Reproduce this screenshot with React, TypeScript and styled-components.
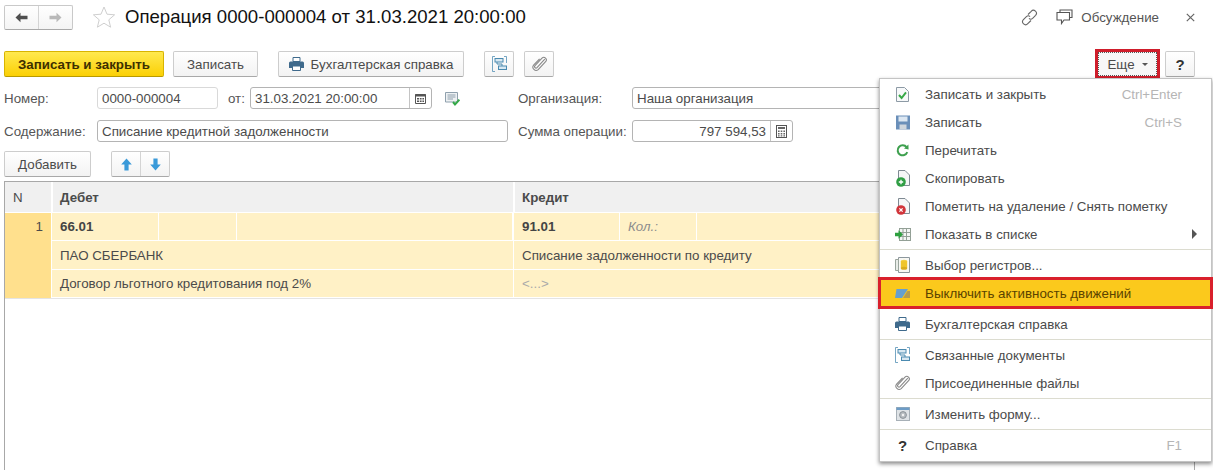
import React from 'react';
import styled, { createGlobalStyle } from 'styled-components';

const GlobalStyle = createGlobalStyle`
  html, body {
    margin: 0;
    padding: 0;
    background: #fff;
  }
  body {
    font-family: "Liberation Sans", Arial, sans-serif;
    font-size: 13.33px;
    color: #4b4b4b;
  }
`;

const Page = styled.div`
  position: relative;
  width: 1213px;
  height: 470px;
  overflow: hidden;
  padding: 4px 18px 0 4px;
  box-sizing: border-box;
`;

const Header = styled.div`
  display: flex;
  align-items: center;
  height: 26px;
`;

const NavGroup = styled.div`
  display: flex;
  width: 69px;
  height: 25px;
  border: 1px solid #c9c9c9;
  border-bottom-color: #a9a9a9;
  border-radius: 2px;
  box-sizing: border-box;
  background: linear-gradient(#fff, #f4f4f4);
`;

const NavCell = styled.div<{ $divider?: boolean }>`
  flex: 1;
  display: flex;
  align-items: center;
  justify-content: center;
  border-left: ${(p) => (p.$divider ? '1px solid #d4d4d4' : 'none')};
`;

const StarWrap = styled.div`
  margin-left: 19px;
  height: 24px;
`;

const Title = styled.h1`
  margin: 0 0 0 9px;
  font-size: 18.6px;
  font-weight: 400;
  color: #111;
  white-space: nowrap;
`;

const HeaderRight = styled.div`
  margin-left: auto;
  display: flex;
  align-items: center;
  color: #555;
`;

const HeaderGap = styled.span`
  width: 18px;
`;

const Discuss = styled.span`
  margin: 0 27px 0 8px;
`;

const Toolbar = styled.div`
  display: flex;
  align-items: center;
  margin-top: 21px;
  height: 26px;
`;

const Button = styled.button<{ $primary?: boolean; $width: number; $gap?: number }>`
  display: flex;
  align-items: center;
  justify-content: center;
  flex: none;
  width: ${(p) => p.$width}px;
  height: 26px;
  margin-left: ${(p) => p.$gap ?? 0}px;
  padding: 0;
  box-sizing: border-box;
  font-family: inherit;
  font-size: 13.33px;
  font-weight: ${(p) => (p.$primary ? 700 : 400)};
  color: ${(p) => (p.$primary ? '#3d3000' : '#4b4b4b')};
  border: 1px solid ${(p) => (p.$primary ? '#d8b400' : '#cdcdcd')};
  border-bottom-color: ${(p) => (p.$primary ? '#b89a00' : '#a9a9a9')};
  border-radius: 2px;
  background: ${(p) => (p.$primary ? 'linear-gradient(#ffe94f, #fbd005)' : 'linear-gradient(#fff, #f3f3f3)')};
  svg + span {
    margin-left: 7px;
  }
`;

const MoreButton = styled(Button)`
  margin-left: auto;
  gap: 7px;
  height: 24px;
  background: #f7f7f7;
  border: 1px dotted #555;
  border-radius: 0;
  outline: 3px solid #cf1d2b;
`;

const Caret = styled.i`
  width: 0;
  height: 0;
  border-left: 3px solid transparent;
  border-right: 3px solid transparent;
  border-top: 3px solid #555;
`;

const FieldRow = styled.div<{ $top: number }>`
  display: flex;
  align-items: center;
  height: 22px;
  margin-top: ${(p) => p.$top}px;
`;

const ActionRow = styled(FieldRow)`
  height: 26px;
`;

const Label = styled.span<{ $width: number; $gap?: number }>`
  flex: none;
  width: ${(p) => p.$width}px;
  margin-left: ${(p) => p.$gap ?? 0}px;
  white-space: nowrap;
  color: #555;
`;

const Input = styled.div<{ $width: number; $dim?: boolean; $right?: boolean }>`
  flex: none;
  display: flex;
  align-items: center;
  width: ${(p) => p.$width}px;
  height: 22px;
  box-sizing: border-box;
  padding: ${(p) => (p.$right ? '0' : '0 0 0 4px')};
  border: 1px solid ${(p) => (p.$dim ? '#d9d9d9' : '#b4b4b4')};
  border-radius: 3px;
  background: #fff;
  color: #4b4b4b;
  white-space: nowrap;
  overflow: hidden;
`;

const InputText = styled.span<{ $right?: boolean }>`
  flex: 1;
  text-align: ${(p) => (p.$right ? 'right' : 'left')};
  padding-right: ${(p) => (p.$right ? '4px' : '0')};
`;

const InputAddon = styled.span`
  flex: none;
  display: flex;
  align-items: center;
  justify-content: center;
  width: 21px;
  height: 100%;
  border-left: 1px solid #c4c4c4;
`;

const StatusIcon = styled.span`
  display: flex;
  margin-left: 13px;
`;

const ArrowGroup = styled.div`
  display: flex;
  width: 59px;
  height: 26px;
  margin-left: 20px;
  box-sizing: border-box;
  border: 1px solid #cdcdcd;
  border-bottom-color: #a9a9a9;
  border-radius: 2px;
  background: linear-gradient(#fff, #f3f3f3);
`;

const TableGrid = styled.div`
  margin-top: 4px;
  height: 300px;
  border: 1px solid #a8a8a8;
  border-bottom: none;
  box-sizing: border-box;
`;

const HeadRow = styled.div`
  display: grid;
  grid-template-columns: 46px 462px 1fr;
  height: 30px;
  background: #f0f0f0;
  color: #4b4b4b;
`;

const HeadCell = styled.div<{ $plain?: boolean }>`
  display: flex;
  align-items: center;
  padding-left: ${(p) => (p.$plain ? '8px' : '7px')};
  border-left: ${(p) => (p.$plain ? 'none' : '2px solid #fff')};
  font-weight: ${(p) => (p.$plain ? 400 : 700)};
`;

const BodyRow = styled.div`
  display: grid;
  grid-template-columns: 46px 1fr;
  height: 85px;
  margin-top: 1px;
  border-bottom: 1px solid #e4e4e4;
`;

const RowNumber = styled.div`
  background: #ffe08d;
  text-align: right;
  padding: 6px 8px 0 0;
`;

const RowSheet = styled.div`
  display: grid;
  grid-template-columns: 462px 1fr;
  grid-template-rows: 28px 29px 28px;
  background: #fff1c6;
`;

const Cell = styled.div<{ $dim?: boolean }>`
  display: flex;
  align-items: center;
  padding-left: 8px;
  border-left: 1px solid #fff;
  border-bottom: 1px solid #fff;
  color: ${(p) => (p.$dim ? '#aaa' : '#4b4b4b')};
  white-space: nowrap;
`;

const SplitCell = styled.div<{ $columns: string }>`
  display: grid;
  grid-template-columns: ${(p) => p.$columns};
  border-left: 1px solid #fff;
  border-bottom: 1px solid #fff;
`;

const SubCell = styled.div<{ $bold?: boolean; $muted?: boolean }>`
  display: flex;
  align-items: center;
  padding-left: 8px;
  border-right: 1px solid #fff;
  font-weight: ${(p) => (p.$bold ? 700 : 400)};
  font-style: ${(p) => (p.$muted ? 'italic' : 'normal')};
  color: ${(p) => (p.$muted ? '#8d8d8d' : '#444')};
`;

const Menu = styled.div`
  position: absolute;
  left: 879px;
  top: 78px;
  width: 333px;
  height: 384px;
  padding-top: 1px;
  box-sizing: border-box;
  background: #fff;
  border: 1px solid #c4c4c4;
  box-shadow: 0 2px 4px rgba(0, 0, 0, 0.45);
`;

const MenuRow = styled.div<{ $active?: boolean }>`
  display: flex;
  align-items: center;
  height: 28px;
  margin-bottom: ${(p) => (p.$active ? '3px' : '0')};
  padding-right: 29px;
  background: ${(p) => (p.$active ? '#fbc91c' : 'transparent')};
  outline: ${(p) => (p.$active ? '3px solid #d9202c' : 'none')};
  outline-offset: -1px;
  color: ${(p) => (p.$active ? '#5a4300' : '#4b4b4b')};
`;

const MenuIcon = styled.span`
  flex: none;
  display: flex;
  justify-content: center;
  width: 45px;
`;

const MenuText = styled.span`
  flex: 1;
  white-space: nowrap;
`;

const Shortcut = styled.span`
  color: #b5b5b5;
`;

const SubArrow = styled.i`
  width: 0;
  height: 0;
  margin-right: -15px;
  border-top: 5px solid transparent;
  border-bottom: 5px solid transparent;
  border-left: 5px solid #555;
`;

const Separator = styled.div`
  height: 1px;
  margin: 1px 0;
  background: #dcdcd0;
`;

const ArrowLeft = ({ color, flip }: { color: string; flip?: boolean }) => (
  <svg width="13" height="11" viewBox="0 0 13 11" style={flip ? { transform: 'scaleX(-1)' } : undefined}>
    <path d="M0.5 5.5 L5.5 0.8 V3.8 H12.5 V7.2 H5.5 V10.2 Z" fill={color} />
  </svg>
);

const Star = () => (
  <svg width="24" height="24" viewBox="0 0 24 24">
    <path d="M12 2 L15 9.2 L22.6 9.8 L16.8 14.8 L18.6 22.2 L12 18.2 L5.4 22.2 L7.2 14.8 L1.4 9.8 L9 9.2 Z" fill="#fff" stroke="#cfcfcf" />
  </svg>
);

const LinkIcon = () => (
  <svg width="17" height="17" viewBox="0 0 17 17" fill="none" stroke="#666" strokeWidth="1.1">
    <path d="M7 5.5 L10.2 2.3 A2.6 2.6 0 0 1 14.6 6.3 L11.6 9.4 A2.6 2.6 0 0 1 8 9.4" />
    <path d="M10 11.5 L6.8 14.7 A2.6 2.6 0 0 1 2.4 10.7 L5.4 7.6 A2.6 2.6 0 0 1 9 7.6" />
  </svg>
);

const ChatIcon = () => (
  <svg width="17" height="16" viewBox="0 0 17 16" fill="none" stroke="#555" strokeWidth="1.1">
    <path d="M4 3.5 V1 H16 V8.5 H13.5" />
    <path d="M1 3.5 H13.5 V11 H8 L5.5 14.5 V11 H1 Z" fill="#fff" />
  </svg>
);

const CloseIcon = () => (
  <svg width="9" height="9" viewBox="0 0 9 9" stroke="#666" strokeWidth="1.2">
    <path d="M0.8 0.8 L8.2 8.2 M8.2 0.8 L0.8 8.2" />
  </svg>
);

const Printer = () => (
  <svg width="15" height="14" viewBox="0 0 15 14">
    <path d="M4 0.5 H11 V4.5 H4 Z" fill="#fff" stroke="#3f6a8c" />
    <path d="M1.5 4.5 H13.5 Q15 4.5 15 6 V11 H12 V9 H3 V11 H0 V6 Q0 4.5 1.5 4.5 Z" fill="#3f6a8c" />
    <path d="M3.5 9 H11.5 V13.5 H3.5 Z" fill="#fff" stroke="#3f6a8c" />
  </svg>
);

const Structure = () => (
  <svg width="15" height="16" viewBox="0 0 15 16" fill="none" stroke="#4a8ab0">
    <path d="M3 0.5 H0.5 V15.5 H3 M12 0.5 H14.5 V7" strokeOpacity="0.75" />
    <rect x="3" y="2.5" width="8" height="3.5" fill="#d8e8f2" />
    <rect x="6.5" y="10" width="8" height="3.5" fill="#d8e8f2" />
    <path d="M5 6 V8 H10 V10" />
  </svg>
);

const Clip = () => (
  <svg width="15" height="16" viewBox="0 0 15 16" fill="none" stroke="#888" strokeWidth="1.1">
    <path d="M12.8 3.2 L5 11.6 A1.4 1.4 0 0 1 3 9.6 L10 2.2 A2.4 2.4 0 0 1 13.6 5.6 L6.2 13.6 A3.2 3.2 0 0 1 1.6 9.2 L7.6 2.8" />
  </svg>
);

const Calendar = () => (
  <svg width="11" height="11" viewBox="0 0 11 11">
    <path d="M0.5 1.5 H10.5 V10.5 H0.5 Z" fill="#fff" stroke="#555" />
    <path d="M0.5 1 H10.5 V3.5 H0.5 Z M2 5 H4 V6.5 H2 Z M4.8 5 H6.6 V6.5 H4.8 Z M7.4 5 H9 V6.5 H7.4 Z M2 7.5 H4 V9 H2 Z M4.8 7.5 H6.6 V9 H4.8 Z M7.4 7.5 H9 V9 H7.4 Z" fill="#555" />
  </svg>
);

const Calculator = () => (
  <svg width="11" height="13" viewBox="0 0 11 13">
    <rect x="0.5" y="0.5" width="10" height="12" fill="#fff" stroke="#555" />
    <path d="M2 2 H9 V4 H2 Z M2 5.5 H3.6 V7 H2 Z M4.7 5.5 H6.3 V7 H4.7 Z M7.4 5.5 H9 V7 H7.4 Z M2 8 H3.6 V9.5 H2 Z M4.7 8 H6.3 V9.5 H4.7 Z M7.4 8 H9 V9.5 H7.4 Z M2 10.3 H3.6 V11.5 H2 Z M4.7 10.3 H6.3 V11.5 H4.7 Z M7.4 10.3 H9 V11.5 H7.4 Z" fill="#666" />
  </svg>
);

const Posted = () => (
  <svg width="15" height="15" viewBox="0 0 15 15">
    <path d="M0.5 1.5 H12.5 V11 H0.5 Z" fill="#eef1f3" stroke="#8fa0ad" />
    <path d="M2.5 4 H10.5 M2.5 6 H10.5 M2.5 8 H8" stroke="#8fa0ad" />
    <path d="M8 11 L10 13.4 L14.4 8.6" fill="none" stroke="#35a948" strokeWidth="2" />
  </svg>
);

const ArrowUp = ({ down }: { down?: boolean }) => (
  <svg width="11" height="13" viewBox="0 0 11 13" style={down ? { transform: 'scaleY(-1)' } : undefined}>
    <path d="M5.5 0.5 L10.8 6.5 H7.6 V12.5 H3.4 V6.5 H0.2 Z" fill="#3a9ad9" />
  </svg>
);

const DocCheck = () => (
  <svg width="13" height="15" viewBox="0 0 13 15">
    <path d="M0.5 0.5 H8.5 L12.5 4.5 V14.5 H0.5 Z" fill="#f7f9fa" stroke="#8d9aa5" />
    <path d="M3 8 L5.6 11 L10 5.4" fill="none" stroke="#36a846" strokeWidth="2" />
  </svg>
);

const Floppy = () => (
  <svg width="14" height="15" viewBox="0 0 14 15">
    <path d="M0 0.5 H14 V14.5 H0 Z" fill="#6a8fb9" />
    <rect x="2.5" y="1.5" width="9" height="5" fill="#dce7f2" />
    <rect x="3.5" y="9.5" width="7" height="5" fill="#cfd6dd" />
  </svg>
);

const Reload = () => (
  <svg width="13" height="13" viewBox="0 0 13 13" fill="none">
    <path d="M10.6 3.2 A5 5 0 1 0 11.3 8.2" stroke="#3ea04f" strokeWidth="2" />
    <path d="M8 4.6 L12.6 5.4 L12.4 0.6 Z" fill="#3ea04f" />
  </svg>
);

const DocBadge = ({ color, mark }: { color: string; mark: 'plus' | 'cross' }) => (
  <svg width="14" height="17" viewBox="0 0 14 17">
    <path d="M2.5 0.5 H9 L13.5 5 V15.5 H2.5 Z" fill="#f5f6f7" stroke="#7f8a93" />
    <circle cx="5" cy="12" r="4.8" fill={color} />
    {mark === 'plus' ? (
      <path d="M2.8 12 H7.2 M5 9.8 V14.2" stroke="#fff" strokeWidth="1.3" />
    ) : (
      <path d="M3.4 10.4 L6.6 13.6 M6.6 10.4 L3.4 13.6" stroke="#fff" strokeWidth="1.3" />
    )}
  </svg>
);

const ShowInList = () => (
  <svg width="16" height="13" viewBox="0 0 16 13">
    <rect x="4.5" y="0.5" width="11" height="12" fill="#f4f6f4" stroke="#93a096" />
    <path d="M8 0.5 V12.5 M11.5 0.5 V12.5 M4.5 4.5 H15.5 M4.5 8.5 H15.5" stroke="#93a096" />
    <path d="M0 4.8 H3.5 V2.2 L8 6.5 L3.5 10.8 V8.2 H0 Z" fill="#2ea03f" />
  </svg>
);

const Registers = () => (
  <svg width="15" height="16" viewBox="0 0 15 16">
    <path d="M3.5 0.5 H14.5 V15.5 H3.5 Z" fill="#f8f8f4" stroke="#8c979d" />
    <path d="M0.5 2.5 H3.5 V13.5 H0.5 Z" fill="#e8ece8" stroke="#9aa59d" />
    <ellipse cx="9" cy="4.2" rx="3.2" ry="1.5" fill="#f3cf3f" />
    <rect x="5.8" y="4.2" width="6.4" height="7" fill="#efc52d" />
    <ellipse cx="9" cy="11.2" rx="3.2" ry="1.5" fill="#d9ac1e" />
  </svg>
);

const Toggle = () => (
  <svg width="15" height="9" viewBox="0 0 15 9">
    <path d="M1.5 0 H13 L7 9 H0 Z" fill="#67a0cf" />
    <path d="M15 2 V9 H8 L12.5 2 Z" fill="#b89c4d" />
  </svg>
);

const FormIcon = () => (
  <svg width="14" height="14" viewBox="0 0 14 14">
    <rect x="0.5" y="0.5" width="13" height="13" fill="#dfe3e6" stroke="#a7b0b7" />
    <rect x="0.5" y="0.5" width="13" height="2.5" fill="#6d9cc6" />
    <circle cx="7" cy="8" r="3.4" fill="#b7bcc0" stroke="#8b9298" />
    <circle cx="7" cy="8" r="1.2" fill="#f2f2f2" />
  </svg>
);

const HelpGlyph = styled.span`
  font-size: 15px;
  font-weight: 700;
  color: #333;
`;

const App = () => (
  <Page>
    <GlobalStyle />
    <Header>
      <NavGroup>
        <NavCell>
          <ArrowLeft color="#4f4f4f" />
        </NavCell>
        <NavCell $divider>
          <ArrowLeft color="#b9b9b9" flip />
        </NavCell>
      </NavGroup>
      <StarWrap>
        <Star />
      </StarWrap>
      <Title>Операция 0000-000004 от 31.03.2021 20:00:00</Title>
      <HeaderRight>
        <LinkIcon />
        <HeaderGap />
        <ChatIcon />
        <Discuss>Обсуждение</Discuss>
        <CloseIcon />
      </HeaderRight>
    </Header>

    <Toolbar>
      <Button $primary $width={160}>Записать и закрыть</Button>
      <Button $width={85} $gap={9}>Записать</Button>
      <Button $width={186} $gap={20}>
        <Printer />
        <span>Бухгалтерская справка</span>
      </Button>
      <Button $width={30} $gap={20}>
        <Structure />
      </Button>
      <Button $width={30} $gap={10}>
        <Clip />
      </Button>
      <MoreButton $width={59}>
        Еще
        <Caret />
      </MoreButton>
      <Button $width={30} $gap={8}>
        <HelpGlyph>?</HelpGlyph>
      </Button>
    </Toolbar>

    <FieldRow $top={10}>
      <Label $width={93}>Номер:</Label>
      <Input $width={121} $dim>0000-000004</Input>
      <Label $width={22} $gap={10}>от:</Label>
      <Input $width={182}>
        <InputText>31.03.2021 20:00:00</InputText>
        <InputAddon>
          <Calendar />
        </InputAddon>
      </Input>
      <StatusIcon>
        <Posted />
      </StatusIcon>
      <Label $width={114} $gap={58}>Организация:</Label>
      <Input $width={300}>Наша организация</Input>
    </FieldRow>

    <FieldRow $top={11}>
      <Label $width={93}>Содержание:</Label>
      <Input $width={411}>Списание кредитной задолженности</Input>
      <Label $width={114} $gap={10}>Сумма операции:</Label>
      <Input $width={161} $right>
        <InputText $right>797 594,53</InputText>
        <InputAddon>
          <Calculator />
        </InputAddon>
      </Input>
    </FieldRow>

    <ActionRow $top={9}>
      <Button $width={87}>Добавить</Button>
      <ArrowGroup>
        <NavCell>
          <ArrowUp />
        </NavCell>
        <NavCell $divider>
          <ArrowUp down />
        </NavCell>
      </ArrowGroup>
    </ActionRow>

    <TableGrid>
      <HeadRow>
        <HeadCell $plain>N</HeadCell>
        <HeadCell>Дебет</HeadCell>
        <HeadCell>Кредит</HeadCell>
      </HeadRow>
      <BodyRow>
        <RowNumber>1</RowNumber>
        <RowSheet>
          <SplitCell $columns="107px 78px 1fr">
            <SubCell $bold>66.01</SubCell>
            <SubCell />
            <SubCell />
          </SplitCell>
          <SplitCell $columns="106px 77px 1fr">
            <SubCell $bold>91.01</SubCell>
            <SubCell $muted>Кол.:</SubCell>
            <SubCell />
          </SplitCell>
          <Cell>ПАО СБЕРБАНК</Cell>
          <Cell>Списание задолженности по кредиту</Cell>
          <Cell>Договор льготного кредитования под 2%</Cell>
          <Cell $dim>&lt;...&gt;</Cell>
        </RowSheet>
      </BodyRow>
    </TableGrid>

    <Menu>
      <MenuRow>
        <MenuIcon><DocCheck /></MenuIcon>
        <MenuText>Записать и закрыть</MenuText>
        <Shortcut>Ctrl+Enter</Shortcut>
      </MenuRow>
      <MenuRow>
        <MenuIcon><Floppy /></MenuIcon>
        <MenuText>Записать</MenuText>
        <Shortcut>Ctrl+S</Shortcut>
      </MenuRow>
      <MenuRow>
        <MenuIcon><Reload /></MenuIcon>
        <MenuText>Перечитать</MenuText>
      </MenuRow>
      <MenuRow>
        <MenuIcon><DocBadge color="#2f9e44" mark="plus" /></MenuIcon>
        <MenuText>Скопировать</MenuText>
      </MenuRow>
      <MenuRow>
        <MenuIcon><DocBadge color="#d1343a" mark="cross" /></MenuIcon>
        <MenuText>Пометить на удаление / Снять пометку</MenuText>
      </MenuRow>
      <MenuRow>
        <MenuIcon><ShowInList /></MenuIcon>
        <MenuText>Показать в списке</MenuText>
        <SubArrow />
      </MenuRow>
      <Separator />
      <MenuRow>
        <MenuIcon><Registers /></MenuIcon>
        <MenuText>Выбор регистров...</MenuText>
      </MenuRow>
      <MenuRow $active>
        <MenuIcon><Toggle /></MenuIcon>
        <MenuText>Выключить активность движений</MenuText>
      </MenuRow>
      <MenuRow>
        <MenuIcon><Printer /></MenuIcon>
        <MenuText>Бухгалтерская справка</MenuText>
      </MenuRow>
      <Separator />
      <MenuRow>
        <MenuIcon><Structure /></MenuIcon>
        <MenuText>Связанные документы</MenuText>
      </MenuRow>
      <MenuRow>
        <MenuIcon><Clip /></MenuIcon>
        <MenuText>Присоединенные файлы</MenuText>
      </MenuRow>
      <Separator />
      <MenuRow>
        <MenuIcon><FormIcon /></MenuIcon>
        <MenuText>Изменить форму...</MenuText>
      </MenuRow>
      <Separator />
      <MenuRow>
        <MenuIcon><HelpGlyph>?</HelpGlyph></MenuIcon>
        <MenuText>Справка</MenuText>
        <Shortcut>F1</Shortcut>
      </MenuRow>
    </Menu>
  </Page>
);

export default App;
